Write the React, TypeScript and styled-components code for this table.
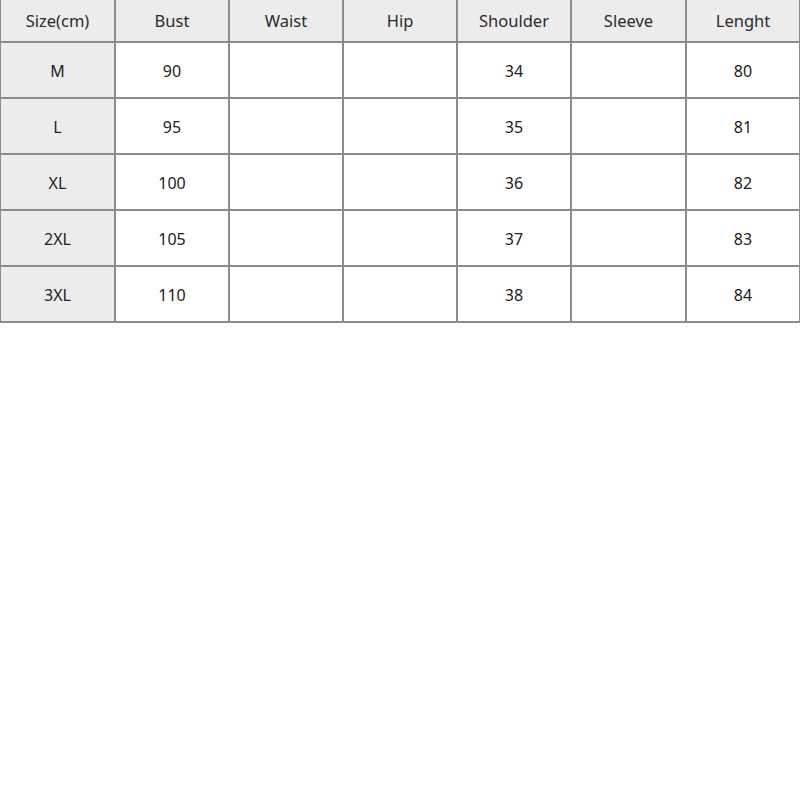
import styled, { createGlobalStyle } from 'styled-components';

const GlobalStyle = createGlobalStyle`
  html, body {
    margin: 0;
    padding: 0;
    background: #fff;
  }
  body {
    font-family: "Noto Sans", "Open Sans", "Liberation Sans", sans-serif;
    color: #333;
  }
`;

const Page = styled.div`
  width: 800px;
  height: 800px;
  overflow: hidden;
  background: #fff;
`;

const Grid = styled.div`
  display: grid;
  grid-template-columns: 115px 114px 114px 114px 114px 115px 114px;
  grid-template-rows: 43px;
  grid-auto-rows: 56px;
  width: 802px;
  border-left: 1px solid #8c8c8c;
`;

const Cell = styled.div<{ $shaded?: boolean; $head?: boolean }>`
  box-sizing: border-box;
  display: flex;
  align-items: center;
  justify-content: center;
  border-right: 2px solid #8c8c8c;
  border-bottom: 2px solid #8c8c8c;
  background: ${({ $shaded }) => ($shaded ? '#ececec' : '#fff')};
  font-size: ${({ $head }) => ($head ? '16.5px' : '16px')};
  color: ${({ $head }) => ($head ? '#2b2b2b' : '#222')};
  padding-top: ${({ $head }) => ($head ? '0' : '1px')};
`;

const headers = ['Size(cm)', 'Bust', 'Waist', 'Hip', 'Shoulder', 'Sleeve', 'Lenght'];

const rows = [
  ['M', '90', '', '', '34', '', '80'],
  ['L', '95', '', '', '35', '', '81'],
  ['XL', '100', '', '', '36', '', '82'],
  ['2XL', '105', '', '', '37', '', '83'],
  ['3XL', '110', '', '', '38', '', '84'],
];

export default function App() {
  return (
    <Page>
      <GlobalStyle />
      <Grid>
        {headers.map((h) => (
          <Cell key={h} $shaded $head>
            {h}
          </Cell>
        ))}
        {rows.map((row) =>
          row.map((v, i) => (
            <Cell key={row[0] + i} $shaded={i === 0}>
              {v}
            </Cell>
          ))
        )}
      </Grid>
    </Page>
  );
}
